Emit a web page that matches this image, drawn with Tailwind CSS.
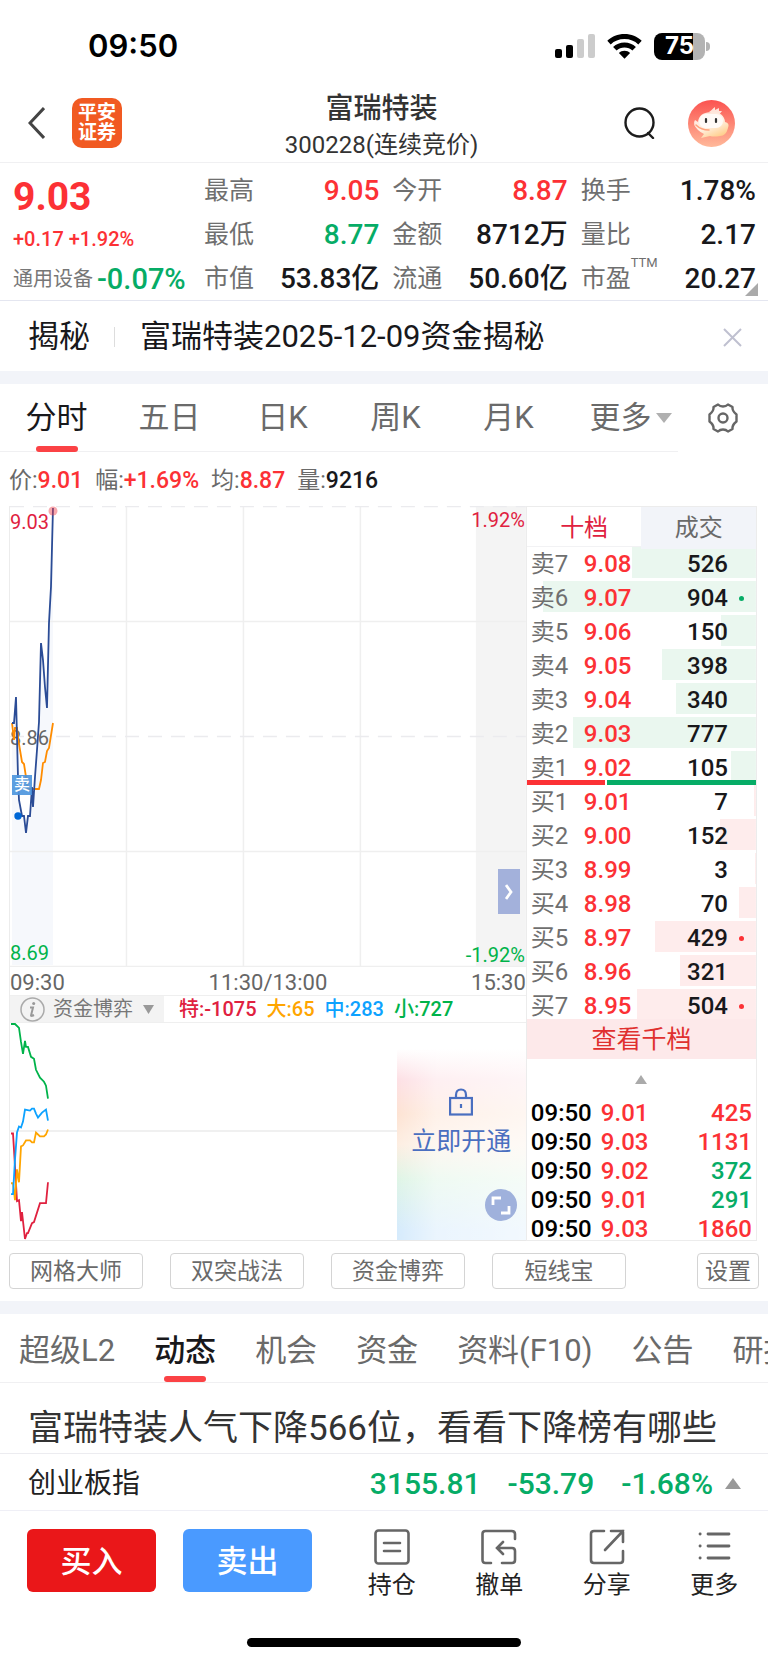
<!DOCTYPE html>
<html lang="zh">
<head>
  <meta charset="UTF-8" />
  <meta name="viewport" content="width=device-width, initial-scale=1.0">
  <title>富瑞特装 300228</title>
  <script src="https://cdn.jsdelivr.net/npm/@tailwindcss/browser@4"></script>
</head>
<body class="bg-white text-[#18181b] font-[Roboto,'Noto_Sans_CJK_SC',sans-serif] overflow-x-hidden">

  <!-- 状态栏 -->
  <div class="flex items-center justify-between h-[82px] pt-[10px] pl-[88px] pr-[58px] text-black">
    <span class="font-[Inter,sans-serif] font-semibold text-[31px] leading-10">09:50</span>
    <div class="flex items-center gap-3">
      <svg class="w-10 h-6" viewBox="0 0 40 24">
        <rect x="0" y="15" width="7" height="9" rx="2" />
        <rect x="11" y="11" width="7" height="13" rx="2" />
        <rect x="22" y="5" width="7" height="19" rx="2" fill="#ccc" />
        <rect x="33" y="0" width="7" height="24" rx="2" fill="#ccc" />
      </svg>
      <svg class="w-[35px] h-[25px]" viewBox="0 0 35 25">
        <path d="M17.5 0C10.8 0 4.7 2.6.3 6.8l3.4 3.6C7.2 7 12.1 5 17.5 5s10.3 2 13.8 5.4l3.400-3.600C30.300 2.600 24.200 0 17.500 0z" />
        <path d="M17.5 8.5c-4.400 0-8.400 1.700-11.400 4.500l3.500 3.600c2-2 4.800-3.100 7.900-3.100s5.900 1.100 7.900 3.100l3.500-3.600c-3-2.800-7-4.500-11.400-4.500z" />
        <path d="M17.5 16.8c-2.200 0-4.100.8-5.600 2.100l5.600 5.800 5.600-5.800c-1.500-1.300-3.400-2.100-5.600-2.100z" />
      </svg>
      <div class="flex items-center gap-px">
        <div class="flex items-center justify-center w-[51px] h-[27px] rounded-lg bg-linear-to-r from-black from-76% to-[#b3b3b3] to-76% text-white font-[Inter,sans-serif] font-bold text-[24px] leading-none">75</div>
        <div class="w-1 h-[9px] rounded-r-full bg-[#b3b3b3]"></div>
      </div>
    </div>
  </div>

  <!-- 标题栏 -->
  <header class="grid grid-cols-[1fr_auto_1fr] items-center h-[81px] pt-px pl-7 pr-[33px] border-b border-[#f0f0f2] text-[#333]">
    <div class="flex items-center gap-[27px]">
      <button aria-label="返回"><svg class="w-[17px] h-8" viewBox="0 0 17 32" fill="none" stroke="#444" stroke-width="3"><path d="M16 1L2 16l14 15" /></svg></button>
      <div class="flex flex-col items-center justify-center w-[50px] h-[50px] rounded-[10px] bg-[#f15a22] text-white font-bold text-[19px] leading-5"><span>平安</span><span>证券</span></div>
    </div>
    <div class="flex flex-col items-center pt-2">
      <h1 class="font-medium text-[28px] leading-9">富瑞特装</h1>
      <p class="text-[24px] leading-9">300228(连续竞价)</p>
    </div>
    <div class="flex items-center justify-end gap-[33px]">
      <button aria-label="搜索"><svg class="w-[31px] h-8" viewBox="0 0 31 32" fill="none" stroke="#1c1c1c" stroke-width="2.4"><circle cx="15.5" cy="15.5" r="14" /><path d="M24 26l5 5" stroke-linecap="round" /></svg></button>
      <svg class="w-[47px] h-[47px]" viewBox="0 0 47 47">
        <defs>
          <linearGradient id="avatarBg" x1="0" y1="0" x2="0" y2="1"><stop offset="0" stop-color="#fb5350" /><stop offset="1" stop-color="#ffb99a" /></linearGradient>
          <linearGradient id="avatarFace" x1="0" y1="0" x2=".6" y2="1"><stop offset="0" stop-color="#ffe3da" /><stop offset=".6" stop-color="#fff0e2" /><stop offset="1" stop-color="#ffd090" /></linearGradient>
        </defs>
        <circle cx="23.5" cy="23.5" r="23.5" fill="url(#avatarBg)" />
        <path d="M21 12c2-1 3-3 6-5l0 3 4-2 0 3 3 0-3 4z" fill="#ffe4da" />
        <path d="M10 30q-6-6-3-10l3 2q1-10 14-10 12 0 13 10 5 1 3 6-2 8-8 8-6 1-10 0l-9 2 3-4q-4-2-6-4z" fill="url(#avatarFace)" />
        <rect x="11" y="14" width="24" height="14" rx="7" fill="#fffaf7" />
        <path d="M18 19v3M28 19v3" stroke="#333" stroke-width="2.2" stroke-linecap="round" />
        <path d="M8 25q5 5 13 5" stroke="#ffa27c" stroke-width="1.500" fill="none" stroke-linecap="round" />
      </svg>
    </div>
  </header>

  <!-- 行情数据 -->
  <section class="relative grid grid-cols-[178px_1fr_1fr_1fr] gap-x-[13px] h-[138px] pt-[6px] pl-[13px] pr-3 border-b border-[#e4e6f0]">
    <div class="flex flex-col text-[#fc3135]">
      <div class="font-bold text-[39px] leading-[56px]">9.03</div>
      <div class="font-medium text-[20px] leading-7">+0.17 +1.92%</div>
      <div class="flex items-center gap-1 mt-1 whitespace-nowrap leading-[44px]"><span class="text-[20px] text-[#777]">通用设备</span><span class="font-medium text-[29px] text-[#06ac66]">-0.07%</span></div>
    </div>
    <dl class="grid grid-cols-[auto_1fr] auto-rows-[44px] leading-[44px] text-[28px] font-medium text-right">
      <dt class="text-[25px] font-normal text-[#6f6f6f]">最高</dt><dd class="text-[#fc3135]">9.05</dd>
      <dt class="text-[25px] font-normal text-[#6f6f6f]">最低</dt><dd class="text-[#06ac66]">8.77</dd>
      <dt class="text-[25px] font-normal text-[#6f6f6f]">市值</dt><dd>53.83亿</dd>
    </dl>
    <dl class="grid grid-cols-[auto_1fr] auto-rows-[44px] leading-[44px] text-[28px] font-medium text-right">
      <dt class="text-[25px] font-normal text-[#6f6f6f]">今开</dt><dd class="text-[#fc3135]">8.87</dd>
      <dt class="text-[25px] font-normal text-[#6f6f6f]">金额</dt><dd>8712万</dd>
      <dt class="text-[25px] font-normal text-[#6f6f6f]">流通</dt><dd>50.60亿</dd>
    </dl>
    <dl class="grid grid-cols-[50px_1fr] auto-rows-[44px] leading-[44px] text-[28px] font-medium text-right">
      <dt class="text-[25px] font-normal text-[#6f6f6f]">换手</dt><dd>1.78%</dd>
      <dt class="text-[25px] font-normal text-[#6f6f6f]">量比</dt><dd>2.17</dd>
      <dt class="relative text-[25px] font-normal text-[#6f6f6f]">市盈<span class="absolute left-full top-0 text-[13px] leading-3">TTM</span></dt><dd>20.27</dd>
    </dl>
    <svg class="absolute right-[10px] bottom-1 w-[13px] h-[13px]" viewBox="0 0 13 13"><path d="M13 0v13H0z" fill="#aaa" /></svg>
  </section>

  <!-- 揭秘 -->
  <div class="flex items-center h-[70px] pt-[2px] pl-7 pr-[26px] text-[31px]">
    <span>揭秘</span>
    <span class="w-px h-5 ml-6 mr-[25px] bg-[#ddd]"></span>
    <a href="#" class="flex-1">富瑞特装2025-12-09资金揭秘</a>
    <button aria-label="关闭"><svg class="w-[19px] h-[19px]" viewBox="0 0 19 19" stroke="#bfc0d0" stroke-width="2"><path d="M1 1l17 17M18 1L1 18" /></svg></button>
  </div>
  <div class="h-[13px] bg-[#f2f4f9]"></div>

  <!-- 周期切换 -->
  <nav class="flex h-[68px] text-[31px] leading-[64px] text-[#6a6a6a]">
    <div class="flex-1 grid grid-cols-6 border-b border-[#f0f0f2]">
      <button class="relative text-[#18181b]">分时<span class="absolute left-1/2 -bottom-px w-[42px] h-[6px] -translate-x-1/2 rounded-sm bg-[#fb4245]"></span></button>
      <button>五日</button>
      <button>日K</button>
      <button>周K</button>
      <button>月K</button>
      <button class="flex items-center justify-center gap-1 pl-[18px] whitespace-nowrap">更多<svg class="w-4 h-[10px]" viewBox="0 0 16 10"><path d="M0 0h16L8 10z" fill="#b0b0b0" /></svg></button>
    </div>
    <button class="flex items-center justify-center w-[90px]" aria-label="图表设置">
      <svg class="w-[30px] h-[30px]" viewBox="0 0 30 30" fill="none" stroke="#666" stroke-width="2.4" stroke-linejoin="round">
        <path d="M10 1.5Q12 3.500 15 3.500T20 1.500L24.500 4Q24 8 28.500 11.500V18.500Q24 22 24.500 26L20 28.500Q18 26.500 15 26.500T10 28.500L5.500 26Q6 22 1.500 18.500V11.500Q6 8 5.500 4Z" />
        <circle cx="15" cy="15" r="4.5" />
      </svg>
    </button>
  </nav>

  <div class="flex items-center gap-3 h-[54px] pt-1 pl-[9px] text-[23px] text-[#6a6a6a]">
    <span>价:<b class="font-medium text-[#fc3135]">9.01</b></span>
    <span>幅:<b class="font-medium text-[#fc3135]">+1.69%</b></span>
    <span>均:<b class="font-medium text-[#fc3135]">8.87</b></span>
    <span>量:<b class="font-medium text-[#18181b]">9216</b></span>
  </div>

  <main class="grid grid-cols-[9fr_4fr] pl-[9px] pr-[11px]">
    <!-- 左侧图表 -->
    <div class="flex flex-col border-x border-[#ececec]">
      <div class="relative h-[461px]">
        <svg class="block w-full h-full" viewBox="0 0 516 461" preserveAspectRatio="none" fill="none">
          <rect x="466" y="0" width="50" height="461" fill="#f4f4f4" />
          <path d="M2 217L4 217 6 191 8 271 9 294 12 310 14 310 16 327 18 310 20 310 22 281 23 301 25 271 27 244 29 216 31 137 33 154 35 181 37 202 39 117 41 81 43 2V459H2z" fill="#f6f8fc" />
          <path d="M0 115.5H516M0 345.5H516M0 460.5H516M116.5 0V461M233.5 0V461M350.5 0V461" stroke="#efefef" stroke-width="1.5" />
          <path d="M0 .5H516M0 230.5H516" stroke="#ebebee" stroke-width="1.5" stroke-dasharray="14 9" />
        </svg>
        <span class="absolute left-0 top-1 text-[20px] leading-6 text-[#e0213f]">9.03</span>
        <span class="absolute right-px top-[2px] text-[20px] leading-6 text-[#e0213f]">1.92%</span>
        <span class="absolute left-0 top-[220px] text-[20px] leading-6 text-[#666]">8.86</span>
        <span class="absolute left-0 bottom-[2px] text-[20px] leading-6 text-[#00b34a]">8.69</span>
        <span class="absolute right-px bottom-0 text-[20px] leading-6 text-[#00b34a]">-1.92%</span>
        <svg class="absolute inset-0 w-full h-full" viewBox="0 0 516 461" preserveAspectRatio="none" fill="none" stroke-width="1.8">
          <path d="M2 217L4 234 5 222 7 222 8 232 10 244 12 256 14 258 16 271 18 283 29 283 31 274 33 257 35 256 37 245 39 242 43 217" stroke="#ff8c00" />
          <path d="M2 217L4 217 6 191 8 271 9 294 12 310 14 310 16 327 18 310 20 310 22 281 23 301 25 271 27 244 29 216 31 137 33 154 35 181 37 202 39 117 41 81 43 2" stroke="#2b4c96" />
          <circle cx="43" cy="5" r="4.5" fill="#f03c46" fill-opacity=".45" />
          <circle cx="8" cy="310" r="3.7" fill="#0068d6" />
        </svg>
        <span class="absolute left-[2px] top-[269px] w-5 h-5 bg-[#4a93dd]/90 text-white text-[16px] leading-5 text-center font-medium">卖</span>
        <button class="absolute right-[6px] top-[363px] flex items-center justify-center w-[22px] h-[45px] bg-[#a3b1db]" aria-label="展开">
          <svg class="w-2 h-4" viewBox="0 0 8 16" fill="none" stroke="#fff" stroke-width="2.8"><path d="M1 1l5 7-5 7" /></svg>
        </button>
      </div>
      <div class="flex items-center justify-between h-7 text-[22px] text-[#666] pt-[2px]"><span>09:30</span><span>11:30/13:00</span><span>15:30</span></div>
      <div class="flex items-center gap-[10px] h-7 border-y border-[#efefef] text-[20px] leading-[26px] font-medium">
        <button class="flex items-center h-[26px] px-[10px] mr-[5px] bg-[#f3f3f3] text-[#777] font-normal">
          <svg class="w-[25px] h-[25px] mr-2" viewBox="0 0 25 25" fill="none" stroke="#aaa"><circle cx="12.5" cy="12.5" r="11.5" stroke-width="1.5" /><path d="M10 10.5h3l-2 8q0 1 3-.5" stroke="#999" stroke-width="2" /><circle cx="13.7" cy="6.5" r="1.5" fill="#999" stroke="none" /></svg>
          资金博弈
          <svg class="w-[11px] h-[9px] ml-[10px]" viewBox="0 0 11 9"><path d="M0 0h11L5.5 9z" fill="#999" /></svg>
        </button>
        <span class="text-[#e0213f]">特:-1075</span>
        <span class="text-[#ffa500]">大:65</span>
        <span class="text-[#0da2ff]">中:283</span>
        <span class="text-[#00b34a]">小:727</span>
      </div>
      <div class="relative flex-1 border-b border-[#e8e8e8]">
        <svg class="absolute inset-0 w-full h-full" viewBox="0 0 516 218" preserveAspectRatio="none" fill="none" stroke-width="1.8">
          <path d="M0 108.5H516" stroke="#f0f0f0" />
          <path d="M1 1L5 1 9 5 11 19 13 31 15 18 16 24 18 24 21 34 24 36 26 47 30 55 34 59 36 63 38 76" stroke="#00b34a" />
          <path d="M1 111L3 111 5 144 7 179 9 178 11 199 12 190 15 217 17 211 18 211 22 201 24 200 30 181 36 181 38 160" stroke="#e0213f" />
          <path d="M1 161L3 161 5 178 7 147 9 160 11 124 13 123 16 118 20 118 22 120 24 120 26 110 30 114 34 114 36 112 38 107" stroke="#ffa500" />
          <path d="M1 172L3 172 5 137 7 110 9 104 11 105 13 99 15 87 20 88 22 86 24 86 26 91 28 95 32 90 36 87 38 98" stroke="#0da2ff" />
        </svg>
        <!-- 未开通遮罩 -->
        <div class="absolute right-0 inset-y-0 w-1/4 bg-[linear-gradient(to_right,#ffffff00_0%,#ffffff80_30%,#ffffffb0_100%),linear-gradient(to_bottom,#fff_12%,#fde0e5_26%,#fde3d3_42%,#fdeee2_56%,#dff5e6_72%,#d6ebfc_95%)]">
          <button class="absolute inset-x-0 top-[65px] flex flex-col items-center gap-2 text-[25px] leading-9 text-[#4a6fc0]">
            <svg class="w-6 h-7" viewBox="0 0 24 28" fill="none" stroke="#4a6fc0" stroke-width="2.2"><rect x="1.1" y="10" width="21.8" height="16.5" /><path d="M7 10V7q0-5.500 5-5.500T17 7v3M12 16v4" /></svg>
            立即开通
          </button>
          <button class="absolute right-[9px] bottom-[19px] w-8 h-8" aria-label="全屏">
            <svg class="w-8 h-8" viewBox="0 0 32 32" fill="none" stroke="#fff" stroke-width="2.8"><circle cx="16" cy="16" r="16" fill="#9fb1dc" stroke="none" /><path d="M8 16V9h8M24 17v7h-8" /></svg>
          </button>
        </div>
      </div>
    </div>

    <!-- 右侧盘口 -->
    <div class="border-y border-r border-[#ececec] text-[24px]">
      <div class="grid grid-cols-2 h-10 leading-[42px] border-b border-[#f2f2f4]">
        <button class="text-[#e0213f]">十档</button>
        <button class="bg-[#f2f4f9] text-[#6a6a6a]">成交</button>
      </div>
      <table class="w-full table-fixed border-collapse">
        <tbody id="sellBook"></tbody>
      </table>
      <div class="relative flex gap-[2px] h-[5px] -mt-[5px] bg-white">
        <div class="w-[34%] bg-[#fc3135]"></div>
        <div class="flex-1 bg-[#06ac66]"></div>
      </div>
      <table class="w-full table-fixed border-collapse">
        <tbody id="buyBook"></tbody>
      </table>
      <button class="relative block w-full h-10 -mt-1 bg-[#fde9ea] text-[#e0302f] text-[25px] leading-[42px]">查看千档</button>
      <div class="flex items-center justify-center h-10"><svg class="w-3 h-[9px]" viewBox="0 0 12 9"><path d="M6 0l6 9H0z" fill="#aaa" /></svg></div>
      <table class="w-full -mb-1 font-medium text-black">
        <tbody id="trades"></tbody>
      </table>
    </div>
  </main>

  <div class="flex items-center gap-[27px] h-[60px] px-[9px] text-[23px] text-[#6a6a6a]">
    <button class="w-[134px] h-9 leading-9 border border-[#d4d4d4] rounded">网格大师</button>
    <button class="w-[134px] h-9 leading-9 border border-[#d4d4d4] rounded">双突战法</button>
    <button class="w-[134px] h-9 leading-9 border border-[#d4d4d4] rounded">资金博弈</button>
    <button class="w-[134px] h-9 leading-9 border border-[#d4d4d4] rounded">短线宝</button>
    <button class="w-[62px] h-9 leading-9 ml-auto border border-[#d4d4d4] rounded">设置</button>
  </div>
  <div class="h-[13px] bg-[#f2f4f9]"></div>

  <!-- 资讯标签 -->
  <nav class="flex gap-[39px] h-[69px] pl-[19px] overflow-hidden whitespace-nowrap border-b border-[#f0f0f2] text-[31px] text-[#6a6a6a]">
    <button class="shrink-0 pt-[6px]">超级L2</button>
    <button class="relative shrink-0 pt-[6px] font-medium text-[#18181b]">动态<span class="absolute left-1/2 bottom-0 w-[42px] h-[6px] -translate-x-1/2 rounded-sm bg-[#fb4245]"></span></button>
    <button class="shrink-0 pt-[6px]">机会</button>
    <button class="shrink-0 pt-[6px]">资金</button>
    <button class="shrink-0 pt-[6px]">资料(F10)</button>
    <button class="shrink-0 pt-[6px]">公告</button>
    <button class="shrink-0 pt-[6px]">研报</button>
  </nav>
  <a href="#" class="block h-[71px] pt-[21px] pl-7 text-[35px] leading-[50px] text-[#333] whitespace-nowrap border-b border-[#ececf0]">富瑞特装人气下降566位，看看下降榜有哪些</a>

  <!-- 指数 -->
  <div class="flex items-center h-[57px] pt-[3px] pl-7 pr-[27px] border-b border-[#efeff6] text-[30px] font-medium text-[#06ac66]">
    <span class="flex-1 text-[28px] font-normal text-[#222]">创业板指</span>
    <span>3155.81</span>
    <span class="ml-[27px]">-53.79</span>
    <span class="ml-[27px]">-1.68%</span>
    <svg class="w-4 h-[11px] ml-3" viewBox="0 0 16 11"><path d="M8 0l8 11H0z" fill="#999" /></svg>
  </div>

  <!-- 底部操作 -->
  <footer class="pt-[18px]">
    <div class="flex items-start pl-[27px]">
      <button class="w-[129px] h-[63px] pt-1 rounded-md bg-[#ea1719] text-white text-[31px] font-medium">买入</button>
      <button class="w-[129px] h-[63px] pt-1 ml-[27px] rounded-md bg-[#4a9aff] text-white text-[31px] font-medium">卖出</button>
      <div class="flex-1 grid grid-cols-4 ml-[26px] text-[24px] leading-8 text-[#222]">
        <button class="flex flex-col items-center gap-1">
          <svg class="w-9 h-9" viewBox="0 0 36 36" fill="none" stroke="#666" stroke-width="2.6" stroke-linecap="round"><rect x="1.5" y="1.5" width="33" height="33" rx="3" /><path d="M10 14h16M10 22h16" /></svg>
          持仓
        </button>
        <button class="flex flex-col items-center gap-1">
          <svg class="w-9 h-9" viewBox="0 0 36 36" fill="none" stroke="#666" stroke-width="2.6" stroke-linecap="round"><path d="M10 34H4.5q-3 0-3-3v-26q0-3 3-3h26q3.5 0 3.5 3V10M22 13l-6 6 6 6M17 19h14q3 0 3 3v9q0 3-3 3H21" /></svg>
          撤单
        </button>
        <button class="flex flex-col items-center gap-1">
          <svg class="w-9 h-9" viewBox="0 0 36 36" fill="none" stroke="#666" stroke-width="2.6" stroke-linecap="round"><path d="M15 2H5Q2 2 2 5v26q0 3 3 3h26q3 0 3-3V22M22 2h12v11M34 2L16 21" /></svg>
          分享
        </button>
        <button class="flex flex-col items-center gap-1">
          <svg class="w-9 h-9" viewBox="0 0 36 36" fill="none" stroke="#666" stroke-width="2.8" stroke-linecap="round"><path d="M12 5h21M12 17h21M12 29h21M4 5h.2M4 17h.2M4 29h.2" /></svg>
          更多
        </button>
      </div>
    </div>
    <div class="w-[274px] h-[9px] mx-auto mt-[37px] mb-[15px] rounded-full bg-black"></div>
  </footer>

  <script>
    const MAX_VOLUME = 970;

    const sells = [
      ["卖7", "9.08", 526], ["卖6", "9.07", 904, true], ["卖5", "9.06", 150], ["卖4", "9.05", 398],
      ["卖3", "9.04", 340], ["卖2", "9.03", 777], ["卖1", "9.02", 105],
    ];
    const buys = [
      ["买1", "9.01", 7], ["买2", "9.00", 152], ["买3", "8.99", 3], ["买4", "8.98", 70],
      ["买5", "8.97", 429, true], ["买6", "8.96", 321], ["买7", "8.95", 504, true],
    ];
    const trades = [
      ["09:50", "9.01", 425, "text-[#fc3135]"],
      ["09:50", "9.03", 1131, "text-[#fc3135]"],
      ["09:50", "9.02", 372, "text-[#06ac66]"],
      ["09:50", "9.01", 291, "text-[#06ac66]"],
      ["09:50", "9.03", 1860, "text-[#fc3135]"],
    ];

    // 挂单量用行背景的长度表示
    function bookRow([label, price, volume, changed], barColor, dotClass) {
      const pct = volume / MAX_VOLUME * 100;
      return `<tr class="h-[34px] leading-[34px] bg-no-repeat bg-top bg-[length:100%_31px]" style="background-image:linear-gradient(to left, ${barColor} ${pct}%, transparent ${pct}%)">
        <td class="w-[57px] pl-1 text-[#6f6f6f]">${label}</td>
        <td class="font-medium text-[#fc3135]">${price}</td>
        <td class="font-medium text-right">${volume}</td>
        <td class="w-[28px]">${changed ? `<div class="w-[5px] h-[5px] mx-auto rounded-full ${dotClass}"></div>` : ""}</td>
      </tr>`;
    }

    document.getElementById("sellBook").innerHTML = sells.map(r => bookRow(r, "#eaf7ef", "bg-[#06ac66]")).join("");
    document.getElementById("buyBook").innerHTML = buys.map(r => bookRow(r, "#feecec", "bg-[#fc3135]")).join("");
    document.getElementById("trades").innerHTML = trades.map(([time, price, volume, color]) =>
      `<tr class="leading-[29px]"><td class="w-[74px] pl-1">${time}</td><td class="text-[#fc3135]">${price}</td><td class="pr-1 text-right ${color}">${volume}</td></tr>`
    ).join("");
  </script>
</body>
</html>
